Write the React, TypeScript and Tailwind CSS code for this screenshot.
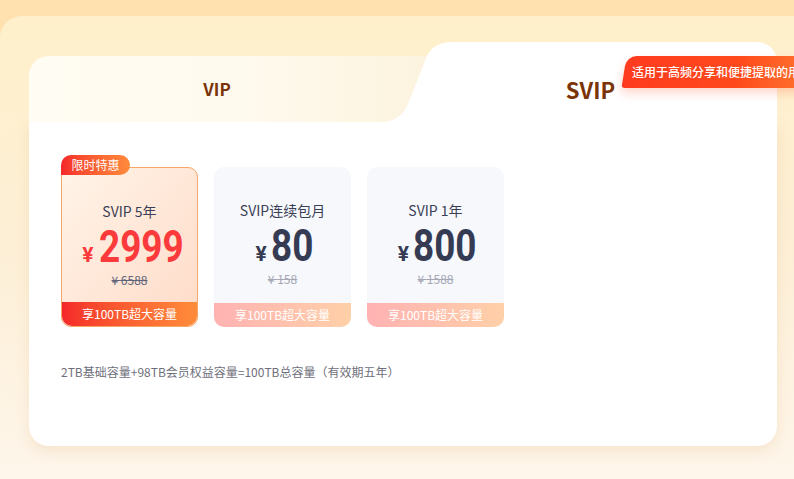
import React from "react";

const cjk = "font-['Noto_Sans_CJK_SC','Noto_Sans',sans-serif]";
const num = "font-['Roboto','Noto_Sans',sans-serif]";

type Plan = {
  title: string;
  price: string;
  orig: string;
  mr: string;
  hot?: boolean;
};

const plans: Plan[] = [
  { title: "SVIP 5年", price: "2999", orig: "6588", mr: "ml-[2px] mr-[-26px]", hot: true },
  { title: "SVIP连续包月", price: "80", orig: "158", mr: "mr-[-13px]" },
  { title: "SVIP 1年", price: "800", orig: "1588", mr: "mr-[-17px]" },
];

function PlanCard({ p }: { p: Plan }) {
  return (
    <div
      className={
        "relative flex h-[160px] w-[137px] flex-col items-center rounded-[10px] " +
        (p.hot
          ? "border border-[#f7a66a] bg-gradient-to-br from-[#fff4e8] to-[#ffdbc8]"
          : "bg-[#f7f8fc]")
      }
    >
      {p.hot && (
        <div
          className={
            "absolute left-[-1px] top-[-13px] flex h-[20px] w-[69px] items-center justify-center rounded-tl-[10px] rounded-tr-[10px] rounded-br-[10px] bg-gradient-to-r from-[#f4262a] to-[#ff8a3c] text-[12px] text-white " +
            cjk
          }
        >
          限时特惠
        </div>
      )}
      <div className={"mt-[33px] h-[20px] text-[14px] leading-[20px] text-[#3a3f55] " + cjk}>
        {p.title}
      </div>
      <div
        className={
          "mt-[3px] flex h-[45px] items-baseline leading-none " +
          (p.hot ? "text-[#fb3a3c]" : "text-[#363b54]")
        }
      >
        <span className={"mr-[4px] text-[21px] font-bold " + num}>¥</span>
        <span className={"inline-block origin-left scale-x-[0.82] text-[45px] font-bold " + num + " " + p.mr}>
          {p.price}
        </span>
      </div>
      <div
        className={
          "mt-[3px] text-[12px] leading-[16px] line-through " +
          cjk +
          " " +
          (p.hot ? "text-[#60647a]" : "text-[#a5a8b4]")
        }
      >
        ¥ {p.orig}
      </div>
      <div
        className={
          "mt-auto flex h-[24px] w-full items-center justify-center rounded-b-[10px] text-[12px] text-white " +
          cjk +
          " " +
          (p.hot
            ? "bg-gradient-to-r from-[#f4262a] to-[#ff8c3a]"
            : "bg-gradient-to-r from-[#ffb2b2] to-[#ffd0a8]")
        }
      >
        享100TB超大容量
      </div>
    </div>
  );
}

export default function App() {
  return (
    <div className="h-[479px] w-[794px] overflow-hidden bg-[#ffe1b0] pt-[16px]">
      <div className="h-[463px] rounded-tl-[22px] bg-gradient-to-b from-[#fff0cb] via-[#fdefd6] to-[#fef6eb] pl-[29px] pt-[26px]">
        <div className="relative w-[748px]">
          {/* header tabs */}
          <div className="flex h-[80px]">
            <div
              className={
                "flex h-[66px] w-[423px] items-center justify-center self-end rounded-tl-[20px] bg-gradient-to-r from-[#fffcf3] via-[#fffaee] to-[#fcf3dd] pr-[47px] text-[17px] font-bold text-[#7a3408] " +
                cjk
              }
            >
              VIP
            </div>
            <div
              className={
                "relative flex flex-1 items-center justify-center rounded-tr-[20px] bg-white pr-[48px] pt-[14px] text-[22px] font-bold text-[#7a3408] " +
                cjk
              }
            >
              <svg
                className="absolute left-[-72px] top-0"
                width="74"
                height="80"
                viewBox="0 0 74 80"
              >
                <path
                  d="M74 0 L72 0 C60 0 51 5 47 14 L28 62 C23 74 14 80 0 80 L74 80 Z"
                  fill="#ffffff"
                />
              </svg>
              <span className="relative">SVIP</span>
            </div>
          </div>

          {/* badge */}
          <div className="absolute left-[595px] top-[14px] h-[32px] w-[230px] -skew-x-[9deg] rounded-tl-[10px] rounded-bl-[3px] bg-gradient-to-r from-[#ff3a1f] via-[#ff4a1c] to-[#ff8838] shadow-[0_5px_10px_rgba(255,90,50,0.25)]">
            <div
              className={
                "flex h-full skew-x-[9deg] items-center whitespace-nowrap pl-[8px] text-[12px] font-medium text-white " +
                cjk
              }
            >
              适用于高频分享和便捷提取的用户
            </div>
          </div>

          {/* body */}
          <div className="h-[324px] rounded-b-[20px] bg-white px-[32px] pt-[45px] shadow-[0_6px_14px_rgba(225,185,130,0.25)]">
            <div className="flex gap-[16px]">
              {plans.map((p) => (
                <PlanCard key={p.title} p={p} />
              ))}
            </div>
            <div className={"mt-[36px] text-[12px] leading-[18px] text-[#6f6f7c] " + cjk}>
              2TB基础容量+98TB会员权益容量=100TB总容量（有效期五年）
            </div>
          </div>
        </div>
      </div>
    </div>
  );
}
